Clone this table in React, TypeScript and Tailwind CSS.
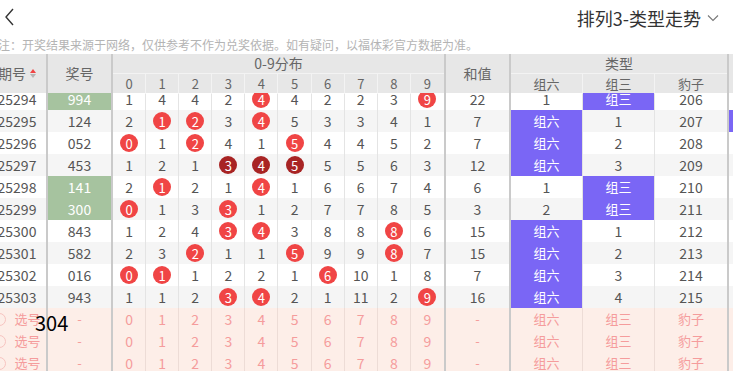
import React from "react";

type Row = {
  issue: string;
  num: string;
  miss: number[];
  sum: number;
  dark?: boolean;
  zu3: boolean;
  counts: [number | null, number | null, number];
  extra?: boolean;
};

const rows: Row[] = [
  { issue: "25294", num: "994", miss: [1, 4, 4, 2, 4, 4, 2, 2, 3, 9], sum: 22, zu3: true, counts: [1, null, 206] },
  { issue: "25295", num: "124", miss: [2, 1, 2, 3, 4, 5, 3, 3, 4, 1], sum: 7, zu3: false, counts: [null, 1, 207], extra: true },
  { issue: "25296", num: "052", miss: [0, 1, 2, 4, 1, 5, 4, 4, 5, 2], sum: 7, zu3: false, counts: [null, 2, 208] },
  { issue: "25297", num: "453", miss: [1, 2, 1, 3, 4, 5, 5, 5, 6, 3], sum: 12, dark: true, zu3: false, counts: [null, 3, 209] },
  { issue: "25298", num: "141", miss: [2, 1, 2, 1, 4, 1, 6, 6, 7, 4], sum: 6, zu3: true, counts: [1, null, 210] },
  { issue: "25299", num: "300", miss: [0, 1, 3, 3, 1, 2, 7, 7, 8, 5], sum: 3, zu3: true, counts: [2, null, 211] },
  { issue: "25300", num: "843", miss: [1, 2, 4, 3, 4, 3, 8, 8, 8, 6], sum: 15, zu3: false, counts: [null, 1, 212] },
  { issue: "25301", num: "582", miss: [2, 3, 2, 1, 1, 5, 9, 9, 8, 7], sum: 15, zu3: false, counts: [null, 2, 213] },
  { issue: "25302", num: "016", miss: [0, 1, 1, 2, 2, 1, 6, 10, 1, 8], sum: 7, zu3: false, counts: [null, 3, 214] },
  { issue: "25303", num: "943", miss: [1, 1, 2, 3, 4, 2, 1, 11, 2, 9], sum: 16, zu3: false, counts: [null, 4, 215] },
];

const digits = [0, 1, 2, 3, 4, 5, 6, 7, 8, 9];

function Ball({ v, dark }: { v: number; dark?: boolean }) {
  return (
    <span
      className={
        "flex h-[18px] w-[18px] items-center justify-center rounded-full text-[13px] leading-none text-white " +
        (dark ? "bg-[#a82424]" : "bg-[#f04545]")
      }
    >
      {v}
    </span>
  );
}

function TypeCell({ on, label, count }: { on: boolean; label: string; count: number | null }) {
  if (on) {
    return (
      <div className="flex items-center justify-center border-r border-[#e4e4e4] bg-[#7a66f5] text-[13px] text-white">
        {label}
      </div>
    );
  }
  return <div className="flex items-center justify-center border-r border-[#e4e4e4]">{count}</div>;
}

function DataRow({ r, i }: { r: Row; i: number }) {
  return (
    <div className={"flex h-[22px] text-[14px] text-[#555] " + (i % 2 === 1 ? "bg-[#f5f5f5]" : "bg-white")}>
      <div className="flex w-[60px] shrink-0 items-center justify-center border-r-2 border-[#cacaca]">{r.issue}</div>
      <div
        className={
          "flex w-[65px] shrink-0 items-center justify-center border-r-2 border-[#cacaca] " +
          (r.zu3 ? "bg-[#a6c39f] text-white" : "")
        }
      >
        {r.num}
      </div>
      <div className="grid w-[333px] shrink-0 grid-cols-10 border-r-2 border-[#cacaca]">
        {digits.map((d) => (
          <div key={d} className="flex items-center justify-center border-r border-[#e4e4e4] last:border-r-0">
            {r.num.includes(String(d)) ? <Ball v={d} dark={r.dark} /> : r.miss[d]}
          </div>
        ))}
      </div>
      <div className="flex w-[65px] shrink-0 items-center justify-center border-r-2 border-[#cacaca]">{r.sum}</div>
      <div className="grid w-[218px] shrink-0 grid-cols-3 border-r-2 border-[#cacaca]">
        <TypeCell on={!r.zu3} label="组六" count={r.counts[0]} />
        <TypeCell on={r.zu3} label="组三" count={r.counts[1]} />
        <div className="flex items-center justify-center">{r.counts[2]}</div>
      </div>
      <div className={"w-[60px] shrink-0 " + (r.extra ? "bg-[#7a66f5]" : "")} />
    </div>
  );
}

function PickRow() {
  return (
    <div className="flex h-[22px] bg-[#fdeee8] text-[13px] text-[#f59c9c]">
      <div className="flex w-[60px] shrink-0 items-center justify-center gap-[8px] border-r-2 border-[#cacaca]">
        <span className="h-[13px] w-[13px] rounded-full border border-[#f7c4c0]" />
        <span>选号</span>
      </div>
      <div className="flex w-[65px] shrink-0 items-center justify-center border-r-2 border-[#cacaca]">-</div>
      <div className="grid w-[333px] shrink-0 grid-cols-10 border-r-2 border-[#cacaca] text-[14px]">
        {digits.map((d) => (
          <div key={d} className="flex items-center justify-center border-r border-[#eddcd6] last:border-r-0">
            {d}
          </div>
        ))}
      </div>
      <div className="flex w-[65px] shrink-0 items-center justify-center border-r-2 border-[#cacaca]">-</div>
      <div className="grid w-[218px] shrink-0 grid-cols-3 border-r-2 border-[#cacaca]">
        <div className="flex items-center justify-center border-r border-[#eddcd6]">组六</div>
        <div className="flex items-center justify-center border-r border-[#eddcd6]">组三</div>
        <div className="flex items-center justify-center">豹子</div>
      </div>
      <div className="w-[60px] shrink-0" />
    </div>
  );
}

export default function App() {
  return (
    <div
      className="relative h-[371px] w-[733px] overflow-hidden bg-white"
      style={{ fontFamily: '"Noto Sans CJK SC", "Noto Sans", sans-serif' }}
    >
      {/* top bar */}
      <div className="flex h-[36px] items-center justify-between">
        <svg width="20" height="20" viewBox="0 0 20 20" className="ml-[1px] -mt-[3px]">
          <polyline points="12,2 5,10 12,18" fill="none" stroke="#333" strokeWidth="1.4" />
        </svg>
        <div className="flex items-center gap-[6px] pr-[14px] text-[18px] text-[#333]">
          <span>排列3-类型走势</span>
          <svg width="12" height="8" viewBox="0 0 12 8">
            <polyline points="1,1.5 6,6.5 11,1.5" fill="none" stroke="#777" strokeWidth="1.1" />
          </svg>
        </div>
      </div>

      {/* notice */}
      <div className="-ml-[2px] h-[18px] whitespace-nowrap text-[12px] leading-[18px] text-[#b4b4b4]">
        注：开奖结果来源于网络，仅供参考不作为兑奖依据。如有疑问，以福体彩官方数据为准。
      </div>

      <div className="-ml-[12px]">
        {/* header */}
        <div className="relative z-10 flex h-[39px] bg-[#e7e7e7] text-[14px] text-[#666]">
          <div className="flex w-[60px] shrink-0 items-center justify-center gap-[4px] border-r-2 border-[#cacaca]">
            <span>期号</span>
            <span className="flex flex-col gap-[1px]">
              <span className="h-0 w-0 border-x-[3px] border-b-[4px] border-x-transparent border-b-[#f04545]" />
              <span className="h-0 w-0 border-x-[3px] border-t-[4px] border-x-transparent border-t-[#b5b5b5]" />
            </span>
          </div>
          <div className="flex w-[65px] shrink-0 items-center justify-center border-r-2 border-[#cacaca]">奖号</div>
          <div className="flex w-[333px] shrink-0 flex-col border-r-2 border-[#cacaca]">
            <div className="flex h-[20px] items-center justify-center border-b border-[#f3f3f3]">0-9分布</div>
            <div className="grid flex-1 grid-cols-10 text-[13px]">
              {digits.map((d) => (
                <div key={d} className="flex items-center justify-center border-r border-[#f3f3f3] last:border-r-0">
                  {d}
                </div>
              ))}
            </div>
          </div>
          <div className="flex w-[65px] shrink-0 items-center justify-center border-r-2 border-[#cacaca]">和值</div>
          <div className="flex w-[218px] shrink-0 flex-col border-r-2 border-[#cacaca]">
            <div className="flex h-[20px] items-center justify-center border-b border-[#f3f3f3]">类型</div>
            <div className="grid flex-1 grid-cols-3 text-[13px]">
              <div className="flex items-center justify-center border-r border-[#f3f3f3]">组六</div>
              <div className="flex items-center justify-center border-r border-[#f3f3f3]">组三</div>
              <div className="flex items-center justify-center">豹子</div>
            </div>
          </div>
          <div className="w-[60px] shrink-0" />
        </div>

        {/* body: a scroll area, scrolled down by 5px */}
        <div className="h-[290px] overflow-hidden">
          <div className="-mt-[5px]">
            {rows.map((r, i) => (
              <DataRow key={r.issue} r={r} i={i} />
            ))}
            <PickRow />
            <PickRow />
            <PickRow />
          </div>
        </div>
      </div>

      <div className="absolute left-[35px] top-[311px] text-[20px] leading-[24px] text-black">304</div>
    </div>
  );
}
